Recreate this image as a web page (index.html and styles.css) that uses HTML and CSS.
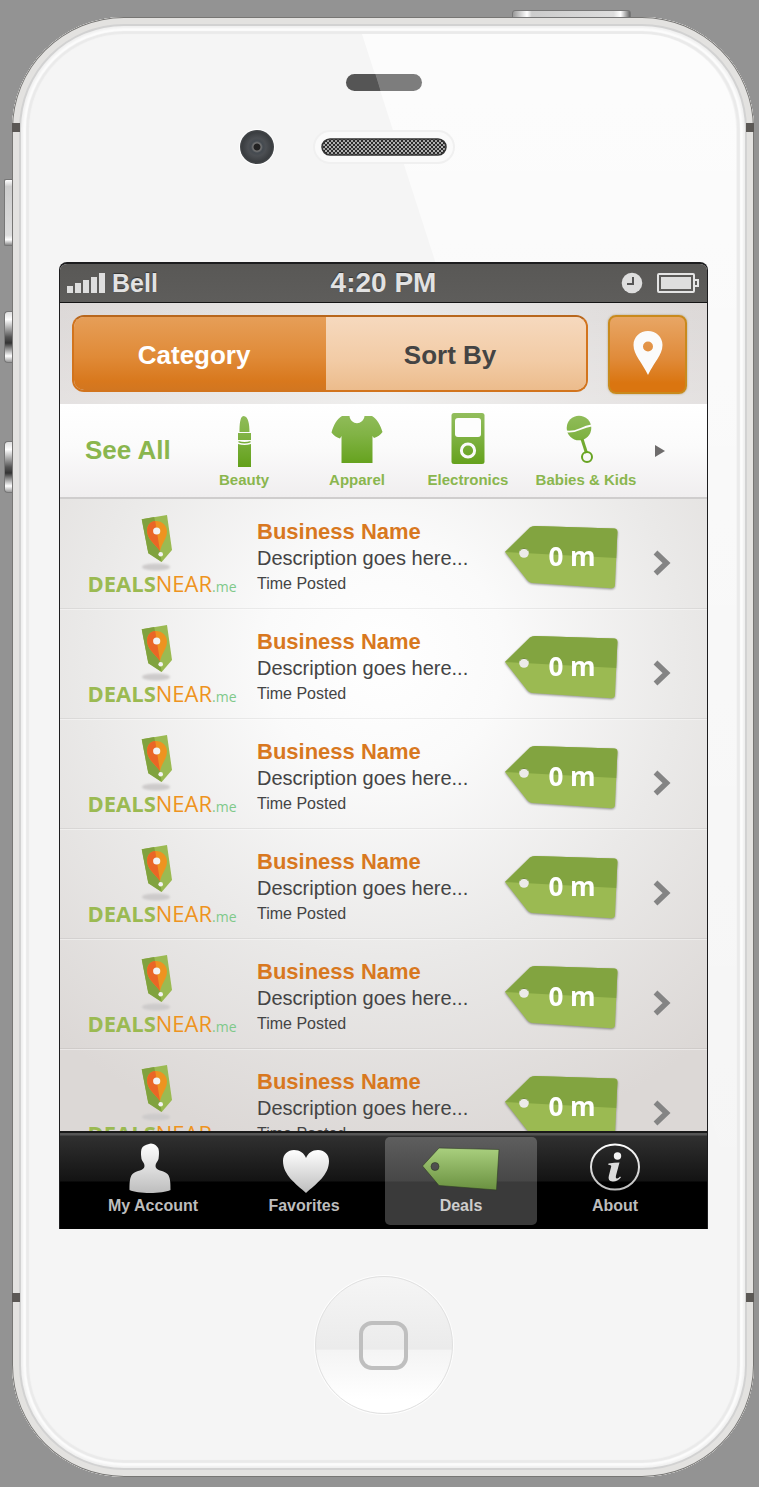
FILE: index.html
```
<!DOCTYPE html>
<html lang="en">
<head>
<meta charset="utf-8">
<meta name="viewport" content="width=device-width, initial-scale=1">
<title>Deals</title>
<link rel="stylesheet" href="styles.css">
</head>
<body>
<svg class="defs" width="0" height="0" aria-hidden="true">
  <defs>
    <linearGradient id="green" x1="0" y1="0" x2="0" y2="54" gradientUnits="userSpaceOnUse">
      <stop offset="0" stop-color="#92bd5c"/><stop offset=".4" stop-color="#81b345"/><stop offset="1" stop-color="#62a019"/>
    </linearGradient>
    <linearGradient id="silver" x1="0" y1="0" x2="0" y2="1"><stop offset="0" stop-color="#fff"/><stop offset="1" stop-color="#bdbdbd"/></linearGradient>
    <linearGradient id="leaf" x1="0" y1="0" x2="0" y2="1"><stop offset="0" stop-color="#a9cf7e"/><stop offset="1" stop-color="#6a9140"/></linearGradient>
    <filter id="soft" x="-20%" y="-50%" width="140%" height="200%"><feGaussianBlur stdDeviation="1"/></filter>
    <symbol id="logo-mark" viewBox="0 0 40 60">
      <ellipse cx="20" cy="55" rx="14" ry="3.500" fill="#cdcbcb" filter="url(#soft)"/>
      <path d="M5.700 7.300 31 3l5 35-10.300 12-13.400-8.700z" fill="#9bba52"/>
      <path d="M5.700 7.300 18.300 5l7.400 45-13.400-8.700z" fill="#80a23e"/>
      <path d="M20 9c6 0 11 4.500 11 10.500 0 7-5 11-7 19.500C19 32 11 27 11 18.500 11 13 15 9 20 9z" fill="#ee9320"/>
      <path d="M19.200 9 24 39C19 32 11 27 11 18.500 11 13 15 9 19.200 9z" fill="#ea6626"/>
      <circle cx="20.700" cy="19" r="3.600" fill="#f4f2f2"/>
      <circle cx="24.700" cy="42.300" r="2.300" fill="#f4f2f2"/>
    </symbol>
    <symbol id="price-tag" viewBox="0 0 116 68">
      <path d="M1 29 26 4.500Q28 3 31 3l79 2.500q3.500 0 3.400 3.500L111 62q-.3 3.500-4 3.300L28 60q-3-.3-5-3z" fill="#9bba52"/>
      <path d="M1 29 26 4.500Q28 3 31 3l79 2.500q3.500 0 3.400 3.500L112.200 35z" fill="#82a440"/>
      <circle cx="20" cy="30" r="4.800" fill="#ecebea"/>
      <path d="M16 27.500a4.800 4.800 0 0 1 8 0" fill="none" stroke="#708e36"/>
    </symbol>
    <symbol id="chevron" viewBox="0 0 18 26"><path d="M2.500 2.500 13.500 13l-11 10.500" fill="none" stroke="#848484" stroke-width="5.500"/></symbol>
  </defs>
</svg>

<div class="phone">
  <span class="key key-power"></span>
  <span class="key key-mute"></span>
  <span class="key key-up"></span>
  <span class="key key-down"></span>
  <span class="band band-tl"></span><span class="band band-tr"></span>
  <span class="band band-bl"></span><span class="band band-br"></span>

  <div class="bezel-top">
    <span class="sensor"></span>
    <div class="earpiece-row">
      <span class="camera"></span>
      <span class="earpiece">
        <svg width="126" height="18" aria-hidden="true">
          <defs>
            <pattern id="mesh" width="4" height="4" patternUnits="userSpaceOnUse"><rect width="4" height="4" fill="#2c2c2c"/><rect width="2" height="2" fill="#b4b4b4"/><rect x="2" y="2" width="2" height="2" fill="#a4a4a4"/></pattern>
          </defs>
          <rect x="1" y="1" width="124" height="16" rx="8" fill="url(#mesh)" stroke="#333" stroke-width="1.500"/>
        </svg>
      </span>
    </div>
  </div>

  <div class="screen">
    <div class="status">
      <div class="status-left">
        <svg width="39" height="20" viewBox="0 0 39 20" fill="#dedede" aria-hidden="true"><path d="M0 13h6v7H0zM8 10h6v10H8zM16 7h6v13h-6zM24 4h6v16h-6zM32 0h6v20h-6z"/></svg>
        <span class="carrier">Bell</span>
      </div>
      <span class="time">4:20 PM</span>
      <div class="status-right">
        <svg width="22" height="22" viewBox="0 0 22 22" aria-hidden="true"><circle cx="11" cy="11" r="10.300" fill="#dedede"/><path d="M12 5v7H6" fill="none" stroke="#555" stroke-width="2"/></svg>
        <svg width="43" height="20" viewBox="0 0 43 20" aria-hidden="true"><rect x="1" y="1" width="36" height="18" rx="1" fill="none" stroke="#e4e4e4" stroke-width="2"/><rect x="4" y="4" width="30" height="12" fill="#dedede"/><path d="M37 7h4v6h-4" fill="none" stroke="#e4e4e4" stroke-width="2"/></svg>
      </div>
    </div>

    <div class="toolbar">
      <div class="segments">
        <button class="segment segment-on" type="button">Category</button>
        <button class="segment segment-off" type="button">Sort By</button>
      </div>
      <button class="locate" type="button" aria-label="Map">
        <svg width="30" height="44" viewBox="0 0 30 44" aria-hidden="true"><path fill-rule="evenodd" d="M15 0C23 0 29.500 6 29.500 14c0 10-9 18-14.500 30C9.500 32 .5 24 .5 14 .5 6 7 0 15 0zm0 10.500a5 5 0 1 0 0 10 5 5 0 0 0 0-10z" fill="#fbfbfb"/></svg>
      </button>
    </div>

    <nav class="categories" aria-label="Categories">
      <a class="see-all" href="#all">See All</a>
      <a class="category" href="#beauty">
        <svg width="54" height="54" viewBox="0 0 54 54" aria-hidden="true"><path fill="url(#green)" d="M22.500 19c0-7 .5-16 4-16 5 0 6 9 6 16zM21 20h13v7H21zM21.500 28q6 2 12 0v1.500q-6 2-12 0zM21 31q6.500 2 13 0v23H21z"/></svg>
        Beauty</a>
      <a class="category" href="#apparel">
        <svg width="54" height="54" viewBox="0 0 54 54" aria-hidden="true"><path fill="url(#green)" d="M12 3h7.500c1 9.500 14 9.500 15 0H42c5 3 8.500 9 10.500 16-2 3-5 5-8.500 6l-1.500-2v27h-31V23L10 25.500c-3.500-1-6.500-3-8.500-6C3.500 12 7 6 12 3z"/></svg>
        Apparel</a>
      <a class="category" href="#electronics">
        <svg width="54" height="54" viewBox="0 0 54 54" aria-hidden="true"><rect x="10.500" width="33" height="51" rx="2.500" fill="url(#green)"/><rect x="14" y="5" width="26" height="19" rx="3" fill="#fdfdfd"/><circle cx="27" cy="37.500" r="6.600" fill="none" stroke="#fafafa" stroke-width="3"/></svg>
        Electronics</a>
      <a class="category" href="#babies">
        <svg width="54" height="54" viewBox="0 0 54 54" aria-hidden="true"><circle cx="20" cy="15" r="12.300" fill="url(#green)"/><path d="M7.500 18.500C19 20 21 14 32.500 12.500" fill="none" stroke="#fdfdfd" stroke-width="1.800"/><path d="m23 26 4.500 14" stroke="#72aa30" stroke-width="3"/><circle cx="28" cy="44" r="5" fill="none" stroke="#68a422" stroke-width="2"/></svg>
        Babies &amp; Kids</a>
      <button class="more" type="button" aria-label="More categories"><svg width="10" height="12" viewBox="0 0 10 12" aria-hidden="true"><path d="M0 0 10 6 0 12z" fill="#6e6c6c"/></svg></button>
    </nav>

    <ul class="deals">
      <li><a class="deal" href="#deal1">
        <span class="logo"><svg class="mark" width="40" height="60" aria-hidden="true"><use href="#logo-mark"/></svg><span class="word"><b>DEALS</b>NEAR<small>.me</small></span></span>
        <span class="info"><strong>Business Name</strong><span class="desc">Description goes here...</span><span class="posted">Time Posted</span></span>
        <span class="tag"><svg width="116" height="68" aria-hidden="true"><use href="#price-tag"/></svg><span class="distance">0 m</span></span>
        <svg class="go" width="18" height="26" aria-hidden="true"><use href="#chevron"/></svg>
      </a></li>
      <li><a class="deal" href="#deal2">
        <span class="logo"><svg class="mark" width="40" height="60" aria-hidden="true"><use href="#logo-mark"/></svg><span class="word"><b>DEALS</b>NEAR<small>.me</small></span></span>
        <span class="info"><strong>Business Name</strong><span class="desc">Description goes here...</span><span class="posted">Time Posted</span></span>
        <span class="tag"><svg width="116" height="68" aria-hidden="true"><use href="#price-tag"/></svg><span class="distance">0 m</span></span>
        <svg class="go" width="18" height="26" aria-hidden="true"><use href="#chevron"/></svg>
      </a></li>
      <li><a class="deal" href="#deal3">
        <span class="logo"><svg class="mark" width="40" height="60" aria-hidden="true"><use href="#logo-mark"/></svg><span class="word"><b>DEALS</b>NEAR<small>.me</small></span></span>
        <span class="info"><strong>Business Name</strong><span class="desc">Description goes here...</span><span class="posted">Time Posted</span></span>
        <span class="tag"><svg width="116" height="68" aria-hidden="true"><use href="#price-tag"/></svg><span class="distance">0 m</span></span>
        <svg class="go" width="18" height="26" aria-hidden="true"><use href="#chevron"/></svg>
      </a></li>
      <li><a class="deal" href="#deal4">
        <span class="logo"><svg class="mark" width="40" height="60" aria-hidden="true"><use href="#logo-mark"/></svg><span class="word"><b>DEALS</b>NEAR<small>.me</small></span></span>
        <span class="info"><strong>Business Name</strong><span class="desc">Description goes here...</span><span class="posted">Time Posted</span></span>
        <span class="tag"><svg width="116" height="68" aria-hidden="true"><use href="#price-tag"/></svg><span class="distance">0 m</span></span>
        <svg class="go" width="18" height="26" aria-hidden="true"><use href="#chevron"/></svg>
      </a></li>
      <li><a class="deal" href="#deal5">
        <span class="logo"><svg class="mark" width="40" height="60" aria-hidden="true"><use href="#logo-mark"/></svg><span class="word"><b>DEALS</b>NEAR<small>.me</small></span></span>
        <span class="info"><strong>Business Name</strong><span class="desc">Description goes here...</span><span class="posted">Time Posted</span></span>
        <span class="tag"><svg width="116" height="68" aria-hidden="true"><use href="#price-tag"/></svg><span class="distance">0 m</span></span>
        <svg class="go" width="18" height="26" aria-hidden="true"><use href="#chevron"/></svg>
      </a></li>
      <li><a class="deal" href="#deal6">
        <span class="logo"><svg class="mark" width="40" height="60" aria-hidden="true"><use href="#logo-mark"/></svg><span class="word"><b>DEALS</b>NEAR<small>.me</small></span></span>
        <span class="info"><strong>Business Name</strong><span class="desc">Description goes here...</span><span class="posted">Time Posted</span></span>
        <span class="tag"><svg width="116" height="68" aria-hidden="true"><use href="#price-tag"/></svg><span class="distance">0 m</span></span>
        <svg class="go" width="18" height="26" aria-hidden="true"><use href="#chevron"/></svg>
      </a></li>
    </ul>

    <nav class="tabs" aria-label="Main">
      <a class="tab" href="#account">
        <svg width="50" height="52" viewBox="3 0 50 52" aria-hidden="true"><path fill="url(#silver)" d="M24 2c3-2 9 2 9.500 5 .8 3 .5 6 0 10-1 3-3 4-3 7 0 5 8 4 12 8 3 3 3 10 3 16-8 4-33 4-41 0 0-6 0-13 3-16 4-4 12-3 12-8 0-3-2-4-3-7-.5-4-.8-7 0-10 1-3 4-4 7.500-5z"/></svg>
        My Account</a>
      <a class="tab" href="#favorites">
        <svg width="50" height="52" viewBox="0 0 50 52" aria-hidden="true"><path fill="url(#silver)" d="M27 51C17 42 4 33 4 19 4 12 9 8 15 8c6 0 10 3 12 8 2-5 6-8 12-8s11 4 11 11c0 14-13 23-23 32z"/></svg>
        Favorites</a>
      <a class="tab tab-on" href="#deals" aria-current="page">
        <svg width="80" height="52" viewBox="0 0 80 52" aria-hidden="true"><path fill-rule="evenodd" fill="url(#leaf)" stroke="#2f3a24" stroke-opacity=".6" d="M1.500 24 18 6l60 1.500L75.500 48 18 43.500zM14 20.500a4 4 0 1 0 0 8 4 4 0 0 0 0-8z"/></svg>
        Deals</a>
      <a class="tab" href="#about">
        <svg width="52" height="52" viewBox="0 0 52 52" aria-hidden="true"><ellipse cx="26" cy="25" rx="24" ry="22.500" fill="none" stroke="url(#silver)" stroke-width="2"/><circle cx="28.500" cy="14" r="3.700" fill="#f4f4f4"/><path fill="#dcdcdc" d="M19.500 21.500q6-1 11-1L27 33.500q-.7 3.500 1.300 3 1.700-.5 2.700-2l1 .7Q28 40 23.500 39.500q-5-.5-3.700-5.500l2.400-9.500q.2-1.700-3-1.700z"/></svg>
        About</a>
    </nav>
  </div>

  <div class="bezel-bottom">
    <button class="home" type="button" aria-label="Home"><span class="home-square"></span></button>
  </div>
</div>
</body>
</html>
```
FILE: styles.css
```
* { box-sizing: border-box; }

body {
  margin: 0;
  height: 100vh;
  min-height: 1000px;
  padding: 17px 5px 10px 12px;
  background: #939393;
  font-family: "Liberation Sans", Arial, Helvetica, sans-serif;
  color: #444;
}

a { color: inherit; text-decoration: none; }
button { font: inherit; border: 0; padding: 0; background: none; cursor: pointer; }
svg { display: block; flex: none; }
.defs { position: absolute; }

/* Handset */
.phone {
  position: relative;
  display: flex;
  flex-direction: column;
  height: 100%;
  padding: 0 46px 0 47px;
  border-radius: 112px;
  background: #f5f5f5;
  box-shadow:
    inset 0 0 0 1px #777674,
    inset 0 0 0 7px #e3e2e0,
    inset 0 0 0 9px #d2d2d2,
    inset 0 0 2px 11px #f0f0f0,
    inset 0 0 1px 14px #fcfcfc,
    inset 0 0 1px 17px #eaeaea;
}
.phone::before {
  content: "";
  position: absolute;
  inset: 17px 18px 240px 17px;
  border-radius: 95px 95px 0 0;
  background: linear-gradient(rgba(255, 255, 255, .75), rgba(255, 255, 255, .4) 40%, rgba(255, 255, 255, 0));
  clip-path: polygon(333px 0, 100% 0, 100% 100%, 720px 100%);
  pointer-events: none;
}
.key {
  position: absolute;
  left: -8px;
  width: 8px;
  border: 1px solid #777;
  border-right: 0;
  border-radius: 4px 0 0 4px;
  background: linear-gradient(#ddd, #fff 15%, #555 50%, #333 62%, #fff 88%, #999);
}
.key-mute { top: 162px; height: 67px; border-radius: 2px 0 0 2px; background: linear-gradient(#fff, #ccc 10%, #ddd 85%, #fff 92%, #888); }
.key-up { top: 294px; height: 52px; }
.key-down { top: 424px; height: 52px; }
.key-power {
  left: auto;
  right: 123px;
  top: -7px;
  width: 119px;
  height: 8px;
  border: 1px solid #777;
  border-radius: 3px 3px 0 0;
  background: linear-gradient(90deg, #999, #fff 12%, #ccc 16%, #ddd 86%, #fff 92%, #666);
}
.band { position: absolute; width: 8px; height: 9px; background: #5b5855; }
.band-tl, .band-tr { top: 106px; }
.band-bl, .band-br { bottom: 175px; }
.band-tl, .band-bl { left: 0; }
.band-tr, .band-br { right: 0; }

.bezel-top {
  position: relative;
  display: flex;
  flex-direction: column;
  align-items: center;
  gap: 39px;
  height: 245px;
  padding-top: 57px;
}
.sensor { flex: none; width: 76px; height: 17px; border-radius: 9px; background: linear-gradient(73deg, #555 42%, #7d7d7d 43%); }
.earpiece-row { display: grid; grid-template-columns: 1fr auto 1fr; align-items: center; width: 100%; }
.camera {
  justify-self: end;
  width: 34px;
  height: 34px;
  margin-right: 41px;
  border-radius: 50%;
  background: radial-gradient(circle, #222 3px, #777 4px, #444a50 6px, #4c4f53 9px, #3a3d40 15px, #77797b);
  box-shadow: 0 0 0 1px #fff;
}
.earpiece { padding: 6px; border-radius: 16px; background: #fafafa; box-shadow: 0 0 0 2px #f0f0f0; }

/* Screen */
.screen {
  position: relative;
  flex: 1;
  min-height: 0;
  display: flex;
  flex-direction: column;
  border: solid #1d1d1f;
  border-width: 2px 1px 0;
  border-radius: 8px 8px 0 0;
  overflow: hidden;
  background: #e4e2e1;
}
.status {
  display: grid;
  grid-template-columns: 1fr auto 1fr;
  align-items: center;
  flex: none;
  height: 39px;
  padding: 0 7px;
  border-bottom: 1px solid #141414;
  background: linear-gradient(#595856, #5e5d5b);
  color: #e2e2e2;
  font-weight: bold;
  text-shadow: 0 -1px 1px #333;
}
.status-left, .status-right { display: flex; align-items: center; gap: 6px; }
.status-right { justify-content: flex-end; gap: 14px; }
.carrier { font-size: 25px; }
.time { font-size: 28px; }

.toolbar {
  display: flex;
  align-items: flex-start;
  gap: 20px;
  flex: none;
  height: 101px;
  padding: 12px 20px 0 12px;
  background: linear-gradient(rgba(255, 255, 255, 0), rgba(255, 255, 255, .25)), linear-gradient(90deg, #dcd8d7, #eae9e8 50%, #dcd8d7);
}
.segments {
  flex: 1;
  display: flex;
  height: 77px;
  border: 2px solid #d2741d;
  border-top-color: #b8671d;
  border-radius: 12px;
  overflow: hidden;
}
.segment { padding: 4px 12px 0 0; font-size: 26px; font-weight: bold; }
.segment-on { flex: 252; color: #fff; background: linear-gradient(#e69e58, #e08a37 55%, #d8781d 88%, #d27620); }
.segment-off { flex: 260; color: #444; background: linear-gradient(#f6d9be, #f2cba5 60%, #ecbc8c); }
.locate {
  display: grid;
  place-items: center;
  width: 79px;
  height: 79px;
  padding-bottom: 4px;
  border: 2px solid #c98a1d;
  border-radius: 8px;
  background: linear-gradient(#e8a665, #e08b3a 55%, #da7510 88%);
  box-shadow: 0 0 2px rgba(120, 90, 0, .5);
}

.categories {
  display: grid;
  grid-template-columns: 127fr 114fr 112fr 110fr 126fr 58fr;
  flex: none;
  height: 95px;
  border-bottom: 2px solid #cfcdcd;
  background: linear-gradient(#fff, #fbfbfb 45%, #f0eeef);
  color: #8ab64e;
  font-weight: bold;
}
.see-all { align-self: center; padding-left: 25px; font-size: 26px; white-space: nowrap; }
.category {
  display: flex;
  flex-direction: column;
  align-items: center;
  gap: 3px;
  padding-top: 9px;
  font-size: 15px;
  line-height: 20px;
  white-space: nowrap;
}
.more { display: flex; align-items: center; padding-left: 6px; }

.deals {
  flex: 1;
  min-height: 0;
  margin: 0;
  padding: 0;
  overflow: hidden;
  list-style: none;
  background: radial-gradient(circle at 50% 25%, #fff 0, #fafafa 120px, #eae9e8 300px, #dcd8d6 500px);
}
.deal {
  display: grid;
  grid-template-columns: 152px 1fr auto auto;
  align-items: center;
  height: 110px;
  padding: 8px 36px 0 26px;
  border-bottom: 1px solid rgba(0, 0, 0, .06);
  box-shadow: 0 1px 0 rgba(255, 255, 255, .4);
}
.logo { display: flex; flex-direction: column; align-items: center; padding-bottom: 6px; }
.mark { margin-right: 12px; }
.word { font-family: "Open Sans", sans-serif; font-size: 22px; line-height: 22px; color: #ee9320; white-space: nowrap; }
.word b { color: #9bba52; }
.word small { font-size: 14px; color: #7fc98a; }
.info { display: flex; flex-direction: column; padding-left: 19px; font-size: 20px; line-height: 26px; white-space: nowrap; }
.info strong { font-size: 22px; color: #d8781f; }
.posted { font-size: 16px; }
.tag { display: grid; padding-bottom: 2px; filter: drop-shadow(0 1px 1px rgba(0, 0, 0, .4)); }
.tag > * { grid-area: 1 / 1; }
.distance { place-self: center; padding: 0 0 2px 20px; font: bold 26px/30px "Open Sans", sans-serif; color: #fff; }
.go { margin: 10px 0 0 33px; }

.tabs {
  display: grid;
  grid-template-columns: 160fr 142fr 172fr 136fr;
  flex: none;
  height: 98px;
  margin: 0 -1px;
  padding: 4px 25px 4px 14px;
  border-top: 2px solid #1a1a1a;
  background: linear-gradient(#555 2px, #303030 3px, #131313 48px, #000 49px);
  color: #bdbdbd;
  font-size: 16px;
  font-weight: bold;
}
.tab {
  display: flex;
  flex-direction: column;
  align-items: center;
  gap: 2px;
  margin: 0 10px;
  padding-top: 5px;
  line-height: 20px;
  white-space: nowrap;
}
.tab-on { border-radius: 5px; color: #cdcdcd; background: linear-gradient(#5e5e5e, #474747 44px, #3a3a3a 45px); }

.bezel-bottom { position: relative; flex: none; height: 248px; padding-top: 47px; text-align: center; }
.home {
  display: inline-grid;
  place-items: center;
  width: 138px;
  height: 138px;
  border: 1px solid #e0e0e0;
  border-radius: 50%;
  background: linear-gradient(#f5f5f5, #ebebeb 53%, #f4f4f4 54%, #fff 90%);
  box-shadow: 0 0 0 1px #fdfdfd;
}
.home-square { width: 49px; height: 49px; border: 4px solid #bfbfbf; border-radius: 13px; }
```
